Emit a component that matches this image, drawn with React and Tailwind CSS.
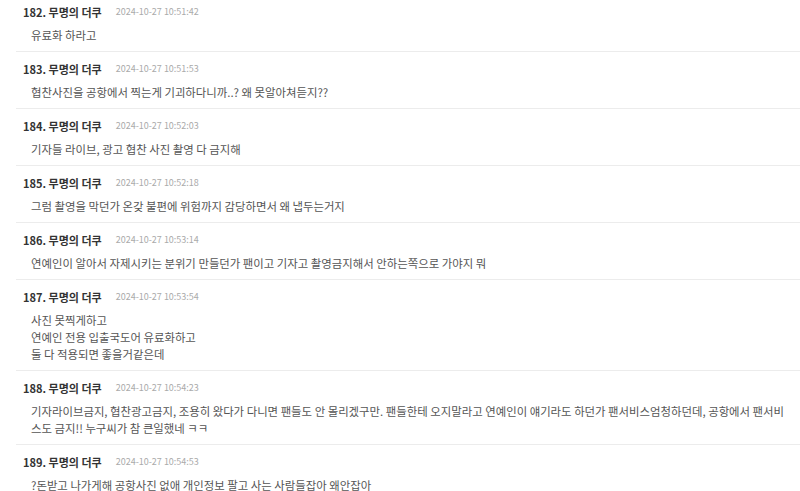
const comments = [
  { no: 182, date: '2024-10-27 10:51:42', lines: ['유료화 하라고'] },
  { no: 183, date: '2024-10-27 10:51:53', lines: ['협찬사진을 공항에서 찍는게 기괴하다니까..? 왜 못알아쳐듣지??'] },
  { no: 184, date: '2024-10-27 10:52:03', lines: ['기자들 라이브, 광고 협찬 사진 촬영 다 금지해'] },
  { no: 185, date: '2024-10-27 10:52:18', lines: ['그럼 촬영을 막던가 온갖 불편에 위험까지 감당하면서 왜 냅두는거지'] },
  { no: 186, date: '2024-10-27 10:53:14', lines: ['연예인이 알아서 자제시키는 분위기 만들던가 팬이고 기자고 촬영금지해서 안하는쪽으로 가야지 뭐'] },
  { no: 187, date: '2024-10-27 10:53:54', lines: ['사진 못찍게하고', '연예인 전용 입출국도어 유료화하고', '둘 다 적용되면 좋을거같은데'] },
  {
    no: 188,
    date: '2024-10-27 10:54:23',
    lines: [
      '기자라이브금지, 협찬광고금지, 조용히 왔다가 다니면 팬들도 안 몰리겠구만. 팬들한테 오지말라고 연예인이 얘기라도 하던가 팬서비스엄청하던데, 공항에서 팬서비',
      '스도 금지!! 누구씨가 참 큰일했네 ㅋㅋ',
    ],
  },
  { no: 189, date: '2024-10-27 10:54:53', lines: ['?돈받고 나가게해 공항사진 없애 개인정보 팔고 사는 사람들잡아 왜안잡아'] },
];

const Comment = ({ c }) => (
  <div className="border-b border-[#ececec] pt-[8px] pb-[7px] pl-[7px]">
    <div className="flex items-center h-[18px]">
      <span className="text-[11px] font-bold text-[#333]">{c.no}. 무명의 더쿠</span>
      <span className="ml-[14px] text-[9px] text-[#aaa]">{c.date}</span>
    </div>
    <div className="mt-[6px] pl-[8px] text-[11.4px] leading-[17px] text-[#555] whitespace-nowrap">
      {c.lines.map((l, i) => (
        <div key={i}>{l}</div>
      ))}
    </div>
  </div>
);

export default function App() {
  return (
    <div
      className="w-[800px] h-[491px] overflow-hidden bg-white"
      style={{ fontFamily: '"Noto Sans CJK KR", "Noto Sans", sans-serif' }}
    >
      <div className="ml-[16px] -mt-[5px]">
        {comments.map(c => (
          <Comment key={c.no} c={c} />
        ))}
      </div>
    </div>
  );
}
